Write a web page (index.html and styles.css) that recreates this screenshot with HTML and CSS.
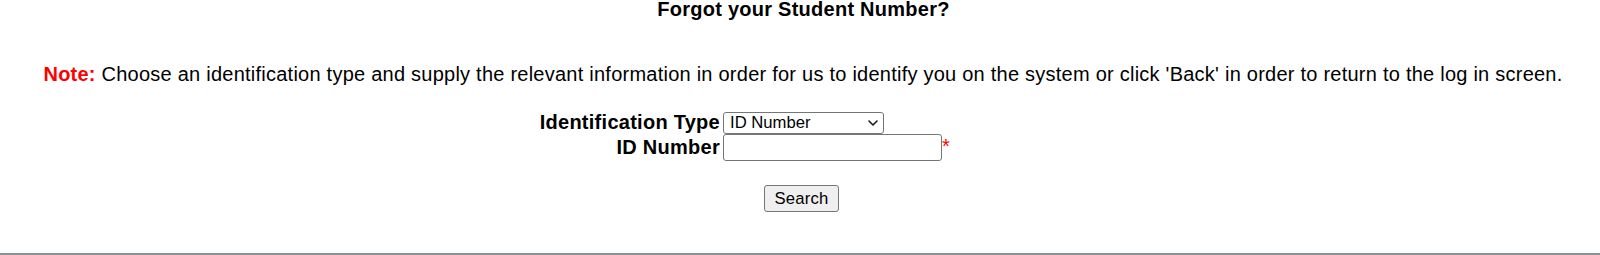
FILE: index.html
```html
<!DOCTYPE html>
<html lang="en">
<head>
<meta charset="utf-8">
<title>Forgot your Student Number?</title>
<link rel="stylesheet" href="styles.css">
</head>
<body>
<div class="page">
  <h1 class="title">Forgot your Student Number?</h1>
  <p class="note"><span class="note-label">Note:</span> Choose an identification type and supply the relevant information in order for us to identify you on the system or click 'Back' in order to return to the log in screen.</p>
  <form class="lookup">
    <label class="field-label" for="idtype">Identification Type</label>
    <div class="field-control">
      <span class="select-wrap">
        <select id="idtype" class="select">
          <option>ID Number</option>
          <option>Passport Number</option>
        </select>
        <svg class="chevron" width="10" height="6" viewBox="0 0 10 6" aria-hidden="true">
          <path d="M1 1 L5 5 L9 1" fill="none" stroke="#1a1a1a" stroke-width="1.6" stroke-linecap="round" stroke-linejoin="round"/>
        </svg>
      </span>
    </div>
    <label class="field-label" for="idnum">ID Number</label>
    <div class="field-control">
      <input id="idnum" class="text-input" type="text"><span class="required">*</span>
    </div>
  </form>
  <div class="actions">
    <button class="button" type="button">Search</button>
  </div>
  <div class="footer-rule"></div>
</div>
</body>
</html>
```

FILE: styles.css
```css
html, body {
  margin: 0;
  padding: 0;
  background: #ffffff;
}

body {
  font-family: "Liberation Sans", Arial, sans-serif;
  color: #000000;
  font-size: 20px;
}

.page {
  width: 1600px;
}

.title {
  margin: 0;
  padding-left: 7px;
  font-size: 20px;
  font-weight: bold;
  line-height: 19px;
  letter-spacing: 0.25px;
  text-align: center;
}

.note {
  margin: 44px 0 0;
  padding-left: 6px;
  font-size: 20px;
  line-height: 23px;
  letter-spacing: 0.24px;
  text-align: center;
  white-space: nowrap;
}

.note-label {
  color: #ff0000;
  font-weight: bold;
}

.lookup {
  margin: 25px 0 0;
  display: grid;
  grid-template-columns: 720px 1fr;
  column-gap: 3px;
  align-items: center;
}

.field-label {
  justify-self: end;
  font-weight: bold;
  font-size: 20px;
  line-height: 23px;
  letter-spacing: 0.27px;
}

.field-control {
  display: flex;
  align-items: baseline;
}

.select-wrap {
  position: relative;
  display: block;
  width: 161px;
  height: 22px;
}

.select {
  -webkit-appearance: none;
  appearance: none;
  display: block;
  box-sizing: border-box;
  width: 161px;
  height: 22px;
  font-family: "Liberation Sans", Arial, sans-serif;
  font-size: 16.67px;
  line-height: 20px;
  color: #000000;
  border: 1px solid #767676;
  border-radius: 3px;
  background: #ffffff;
  padding: 0 20px 0 6px;
  margin: 0;
}

.chevron {
  position: absolute;
  right: 6px;
  top: 8px;
  pointer-events: none;
}

.text-input {
  box-sizing: border-box;
  width: 219px;
  height: 27px;
  font-family: "Liberation Sans", Arial, sans-serif;
  font-size: 16.67px;
  border: 1px solid #767676;
  border-radius: 3px;
  padding: 1px 2px;
  margin: 0;
}

.required {
  color: #ff0000;
  font-size: 20px;
  line-height: 23px;
}

.actions {
  margin-top: 24px;
  display: flex;
  justify-content: center;
  padding-left: 3px;
}

.button {
  box-sizing: border-box;
  width: 75px;
  height: 27px;
  font-family: "Liberation Sans", Arial, sans-serif;
  font-size: 16.67px;
  letter-spacing: 0.2px;
  color: #000000;
  background: #efefef;
  border: 1px solid #767676;
  border-radius: 3px;
  padding: 0;
  margin: 0;
}

.footer-rule {
  margin-top: 41px;
  border-top: 2px solid #8c9196;
}
```
